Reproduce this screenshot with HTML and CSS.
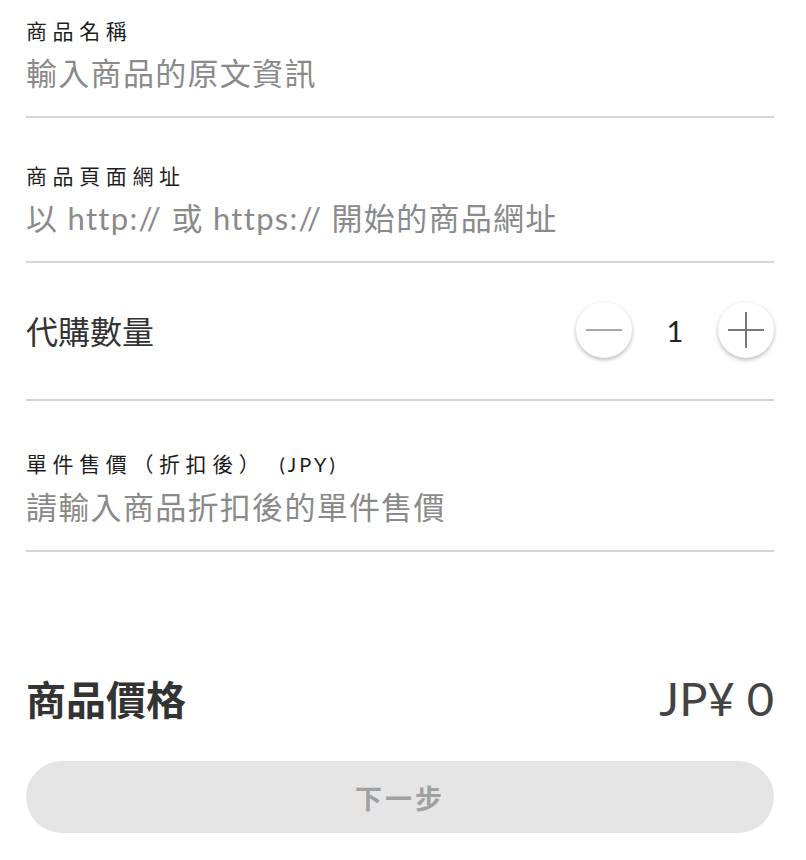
FILE: index.html
```html
<!DOCTYPE html>
<html lang="zh-Hant">
<head>
<meta charset="utf-8">
<link rel="stylesheet" href="styles.css">
</head>
<body>
<div class="page">
  <div class="field field-first">
    <div class="label">商品名稱</div>
    <div class="placeholder">輸入商品的原文資訊</div>
  </div>
  <div class="field field-url">
    <div class="label">商品頁面網址</div>
    <div class="placeholder">以 http:// 或 https:// 開始的商品網址</div>
  </div>
  <div class="qty-row">
    <div class="qty-label">代購數量</div>
    <div class="stepper">
      <div class="step-btn">
        <svg width="36" height="36" viewBox="0 0 36 36"><path d="M0 18H36" stroke="#a8a8a8" stroke-width="2"/></svg>
      </div>
      <div class="qty-num">1</div>
      <div class="step-btn">
        <svg width="36" height="36" viewBox="0 0 36 36"><path d="M0 18H36M18 0V36" stroke="#777" stroke-width="2"/></svg>
      </div>
    </div>
  </div>
  <div class="field field-price">
    <div class="label">單件售價（折扣後）<span class="unit">(JPY)</span></div>
    <div class="placeholder">請輸入商品折扣後的單件售價</div>
  </div>
  <div class="total-row">
    <div class="total-label">商品價格</div>
    <div class="total-value">JP¥ 0</div>
  </div>
  <div class="next-btn">下一步</div>
</div>
</body>
</html>
```

FILE: styles.css
```css
html, body {
  margin: 0;
  padding: 0;
  background: #fff;
}
body {
  font-family: Lato, "Noto Sans CJK TC", sans-serif;
  color: #222;
}
.page {
  padding: 0 32px 0 26px;
}
.field {
  border-bottom: 2px solid #d6d6d6;
  padding-bottom: 23px;
}
.field-first { padding-top: 15px; }
.field-url { padding-top: 42px; }
.field-price { padding-top: 47px; }
.label {
  font-family: "Noto Sans CJK TC", sans-serif;
  font-size: 21px;
  line-height: 30px;
  letter-spacing: 5.6px;
  color: #1e1e1e;
}
.unit {
  font-family: Lato, sans-serif;
  font-size: 20px;
  letter-spacing: 3px;
  margin-left: 14px;
}
.placeholder {
  font-family: Lato, "Noto Sans CJK TC", sans-serif;
  font-size: 31px;
  line-height: 40px;
  letter-spacing: 1.3px;
  color: #8a8a8a;
  margin-top: 8px;
}
.qty-row {
  display: flex;
  align-items: center;
  justify-content: space-between;
  height: 136px;
  border-bottom: 2px solid #d6d6d6;
}
.qty-label {
  font-family: "Noto Sans CJK TC", sans-serif;
  font-size: 32px;
  color: #333;
  margin-top: -2px;
}
.stepper {
  display: flex;
  align-items: center;
  margin-top: -2px;
}
.step-btn {
  width: 56px;
  height: 56px;
  border-radius: 50%;
  background: #fff;
  box-shadow: 0 2px 4px rgba(0,0,0,0.28);
  display: flex;
  align-items: center;
  justify-content: center;
}
.qty-num {
  width: 86px;
  text-align: center;
  font-family: Lato, sans-serif;
  font-size: 29px;
  color: #222;
}
.total-row {
  display: flex;
  justify-content: space-between;
  align-items: center;
  margin-top: 117px;
  height: 58px;
}
.total-label {
  font-family: "Noto Sans CJK TC", sans-serif;
  font-size: 40px;
  font-weight: 700;
  color: #333;
}
.total-value {
  font-family: Lato, sans-serif;
  font-size: 47px;
  font-weight: 400;
  color: #444;
}
.next-btn {
  margin-top: 34px;
  height: 72px;
  border-radius: 36px;
  background: #e5e5e5;
  color: #a0a0a0;
  font-family: "Noto Sans CJK TC", sans-serif;
  font-size: 27px;
  font-weight: 700;
  letter-spacing: 3px;
  display: flex;
  align-items: center;
  justify-content: center;
  margin-bottom: 0;
}
```
